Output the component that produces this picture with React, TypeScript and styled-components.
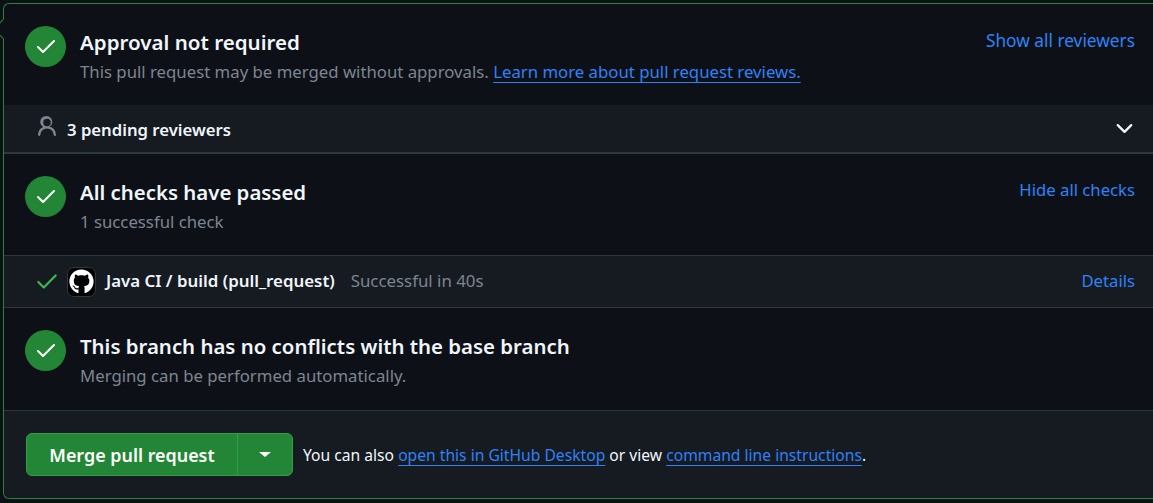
import React from 'react'
import styled, { createGlobalStyle } from 'styled-components'
import { Check, ChevronDown } from 'lucide-react'
import { FaGithub } from 'react-icons/fa'

const GlobalStyle = createGlobalStyle`
  html, body {
    margin: 0;
    padding: 0;
    background: #0d1117;
    overflow: hidden;
  }
  body {
    font-family: "Noto Sans", "Open Sans", sans-serif;
  }
`

const Page = styled.div`
  width: 1153px;
  height: 503px;
  padding: 3px 0 0 3px;
  box-sizing: border-box;
  overflow: hidden;
`

const Frame = styled.div`
  border: 1px solid #238636;
  border-right: 0;
  border-radius: 6px 0 0 6px;
  height: 496px;
  box-sizing: border-box;
  display: flex;
  flex-direction: column;
  position: relative;

  &::before {
    content: '';
    position: absolute;
    top: 18px;
    left: -8px;
    width: 14px;
    height: 14px;
    background: #0d1117;
    border-left: 1px solid #238636;
    border-bottom: 1px solid #238636;
    transform: rotate(45deg);
    box-sizing: border-box;
  }
`

const Section = styled.section<{ $height?: number }>`
  height: ${p => p.$height ?? 101}px;
  display: flex;
  justify-content: space-between;
  padding: 22px 18px 0 21px;
  box-sizing: border-box;
`

const Lead = styled.div`
  display: flex;
  gap: 14px;
`

const Badge = styled.div`
  width: 41px;
  height: 41px;
  border-radius: 50%;
  background: #238636;
  color: #fff;
  display: flex;
  align-items: center;
  justify-content: center;
`

const Copy = styled.div`
  padding-top: 2px;
`

const Title = styled.div<{ $size?: number }>`
  font-size: ${p => p.$size ?? 20.4}px;
  font-weight: 600;
  line-height: 28px;
  color: #f0f6fc;
`

const Sub = styled.div`
  font-size: 16.75px;
  line-height: 24px;
  margin-top: 4px;
  color: #7d8590;
`

const TextLink = styled.a`
  color: #2f81f7;
  text-decoration: underline;
  text-decoration-thickness: 1px;
  text-underline-offset: 4px;
`

const SideLink = styled.a<{ $size?: number; $top?: number }>`
  color: #2f81f7;
  font-size: ${p => p.$size ?? 16.7}px;
  line-height: 24px;
  margin-top: ${p => p.$top ?? 2}px;
`

const Pending = styled.div`
  height: 49px;
  background: #161b22;
  border-bottom: 2px solid #30363d;
  display: flex;
  align-items: center;
  padding: 0 15px 0 31px;
  box-sizing: border-box;
  color: #f0f6fc;
  font-size: 16.7px;
  font-weight: 600;
`

const PersonIcon = styled.svg`
  width: 24px;
  height: 24px;
  margin: 0 8px 3px 0;
  fill: #7d8590;
`

const PendingLabel = styled.span`
  padding-top: 2px;
`

const Spacer = styled.div`
  flex: 1;
`

const CheckRow = styled.div`
  height: 53px;
  background: #161b22;
  border-top: 1px solid #30363d;
  border-bottom: 1px solid #30363d;
  display: flex;
  align-items: center;
  padding: 0 18px 0 30px;
  box-sizing: border-box;
  font-size: 16.85px;
`

const AppLogo = styled.div`
  width: 29px;
  height: 30px;
  margin: 0 10px 0 7px;
  border-radius: 7px;
  background: #000;
  border: 1px solid #30363d;
  box-sizing: border-box;
  color: #fff;
  display: flex;
  align-items: center;
  justify-content: center;
`

const CheckName = styled.span`
  color: #f0f6fc;
  font-weight: 600;
  margin: 0 16px 2px 0;
`

const Muted = styled.span`
  color: #7d8590;
  margin-bottom: 2px;
`

const DetailsLink = styled(SideLink)`
  margin: 0 0 2px;
`

const MergeBar = styled.div`
  flex: 1;
  background: #161b22;
  border-top: 1px solid #30363d;
  border-radius: 0 0 0 6px;
  display: flex;
  align-items: center;
  padding: 0 0 0 22px;
  gap: 10px;
  color: #f0f6fc;
  font-size: 15.65px;
`

const MergeButton = styled.div`
  display: flex;
  height: 43px;
  border-radius: 6px;
  background: #238636;
  border: 1px solid #2ea043;
  box-sizing: border-box;
  color: #fff;
  font-weight: 600;
  font-size: 17.9px;
`

const MergeLabel = styled.div`
  width: 210px;
  display: flex;
  align-items: center;
  justify-content: center;
  border-right: 1px solid #2ea043;
`

const Caret = styled.div`
  width: 54px;
  display: flex;
  align-items: center;
  justify-content: center;

  &::after {
    content: '';
    border-style: solid;
    border-width: 5px 6px 0;
    border-color: #fff transparent transparent;
  }
`

const DoneBadge: React.FC = () => (
  <Badge>
    <Check size={24} strokeWidth={2} />
  </Badge>
)

const App: React.FC = () => (
  <Page>
    <GlobalStyle />
    <Frame>
      <Section>
        <Lead>
          <DoneBadge />
          <Copy>
            <Title $size={20.55}>Approval not required</Title>
            <Sub>
              This pull request may be merged without approvals.{' '}
              <TextLink href="#">Learn more about pull request reviews.</TextLink>
            </Sub>
          </Copy>
        </Lead>
        <SideLink $size={17.3} $top={3}>
          Show all reviewers
        </SideLink>
      </Section>
      <Pending>
        <PersonIcon viewBox="0 0 16 16">
          <path d="M10.561 8.073a6.005 6.005 0 0 1 3.432 5.142.75.75 0 1 1-1.498.07 4.5 4.5 0 0 0-8.99 0 .75.75 0 0 1-1.498-.07 6.004 6.004 0 0 1 3.431-5.142 3.999 3.999 0 1 1 4.123 0ZM10.5 5a2.5 2.5 0 1 0-5 0 2.5 2.5 0 0 0 5 0Z" />
        </PersonIcon>
        <PendingLabel>3 pending reviewers</PendingLabel>
        <Spacer />
        <ChevronDown size={27} strokeWidth={2} />
      </Pending>
      <Section>
        <Lead>
          <DoneBadge />
          <Copy>
            <Title>All checks have passed</Title>
            <Sub>1 successful check</Sub>
          </Copy>
        </Lead>
        <SideLink>Hide all checks</SideLink>
      </Section>
      <CheckRow>
        <Check size={26} strokeWidth={2} color="#3fb950" />
        <AppLogo>
          <FaGithub size={25} />
        </AppLogo>
        <CheckName>Java CI / build (pull_request)</CheckName>
        <Muted>Successful in 40s</Muted>
        <Spacer />
        <DetailsLink>Details</DetailsLink>
      </CheckRow>
      <Section $height={102}>
        <Lead>
          <DoneBadge />
          <Copy>
            <Title>This branch has no conflicts with the base branch</Title>
            <Sub>Merging can be performed automatically.</Sub>
          </Copy>
        </Lead>
      </Section>
      <MergeBar>
        <MergeButton>
          <MergeLabel>Merge pull request</MergeLabel>
          <Caret />
        </MergeButton>
        <span>
          You can also <TextLink href="#">open this in GitHub Desktop</TextLink> or view{' '}
          <TextLink href="#">command line instructions</TextLink>.
        </span>
      </MergeBar>
    </Frame>
  </Page>
)

export default App
